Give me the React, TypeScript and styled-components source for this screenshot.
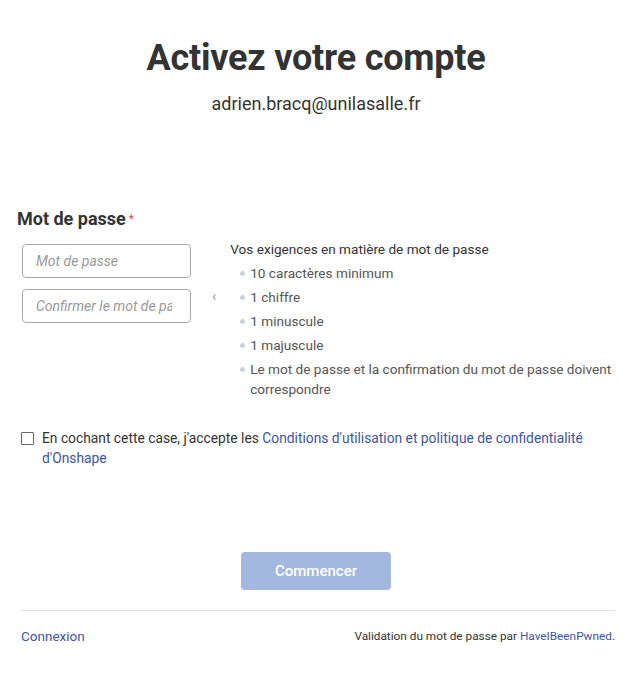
import React, { useState } from 'react'
import styled, { createGlobalStyle } from 'styled-components'

const GlobalStyle = createGlobalStyle`
  html, body {
    margin: 0;
    padding: 0;
    background: #fff;
    font-family: Roboto, "Liberation Sans", sans-serif;
    color: #333;
  }
  * { box-sizing: border-box; }
`

const requirements = [
  '10 caractères minimum',
  '1 chiffre',
  '1 minuscule',
  '1 majuscule',
  'Le mot de passe et la confirmation du mot de passe doivent correspondre',
]

export default function App() {
  const [accepted, setAccepted] = useState(false)

  return (
    <Page>
      <GlobalStyle />
      <Header>
        <Title>Activez votre compte</Title>
        <Email>adrien.bracq@unilasalle.fr</Email>
      </Header>

      <Section>
        <Label>
          Mot de passe<Required>*</Required>
        </Label>
        <PasswordRow>
          <Inputs>
            <Input type="password" placeholder="Mot de passe" />
            <Input type="password" placeholder="Confirmer le mot de passe" />
          </Inputs>
          <Caret>‹</Caret>
          <Requirements>
            <ReqTitle>Vos exigences en matière de mot de passe</ReqTitle>
            <ReqList>
              {requirements.map((r) => (
                <ReqItem key={r}>{r}</ReqItem>
              ))}
            </ReqList>
          </Requirements>
        </PasswordRow>
      </Section>

      <Terms>
        <Checkbox type="checkbox" checked={accepted} onChange={(e) => setAccepted(e.target.checked)} />
        <TermsText>
          En cochant cette case, j'accepte les{' '}
          <Link href="#">Conditions d'utilisation et politique de confidentialité d'Onshape</Link>
        </TermsText>
      </Terms>

      <Actions>
        <StartButton disabled={!accepted}>Commencer</StartButton>
      </Actions>

      <Footer>
        <Link href="#">Connexion</Link>
        <FooterNote>
          Validation du mot de passe par <Link href="#">HaveIBeenPwned</Link>.
        </FooterNote>
      </Footer>
    </Page>
  )
}

const Page = styled.div`
  width: 635px;
  padding: 0 20px 0 17px;
`

const Header = styled.div`
  display: flex;
  flex-direction: column;
  align-items: center;
  padding-top: 36px;
`

const Title = styled.h1`
  margin: 0;
  font-size: 36px;
  font-weight: 700;
  line-height: 44px;
  color: #333;
  letter-spacing: -0.2px;
`

const Email = styled.div`
  margin-top: 13px;
  font-size: 18px;
  line-height: 22px;
  color: #333;
`

const Section = styled.div`
  margin-top: 92px;
`

const Label = styled.div`
  font-size: 18px;
  font-weight: 700;
  line-height: 24px;
  color: #333;
`

const Required = styled.span`
  color: #d9534f;
  font-size: 12px;
  font-weight: 400;
  margin-left: 3px;
  vertical-align: top;
`

const PasswordRow = styled.div`
  display: flex;
  align-items: flex-start;
  margin-top: 8px;
  padding-left: 5px;
`

const Inputs = styled.div`
  display: flex;
  flex-direction: column;
  gap: 11px;
  margin-top: 5px;
`

const Input = styled.input`
  width: 169px;
  height: 34px;
  border: 1px solid #aaa;
  border-radius: 4px;
  padding: 0 18px 0 13px;
  font-family: inherit;
  font-size: 14px;
  color: #333;
  outline: none;
  &::placeholder {
    color: #999;
    font-style: italic;
  }
`

const Caret = styled.span`
  margin: 49px 14px 0 21px;
  color: #999;
  font-size: 14px;
  line-height: 16px;
`

const Requirements = styled.div`
  flex: 1;
  font-size: 13.6px;
  margin-right: -6px;
`

const ReqTitle = styled.div`
  line-height: 20px;
  color: #333;
`

const ReqList = styled.ul`
  margin: 0;
  padding: 0 0 0 10px;
  list-style: none;
`

const ReqItem = styled.li`
  position: relative;
  padding-left: 10px;
  margin-top: 4px;
  line-height: 20px;
  color: #555;
  &::before {
    content: '';
    position: absolute;
    left: 0;
    top: 8px;
    width: 5px;
    height: 5px;
    border-radius: 50%;
    background: #ccd3dc;
  }
`

const Terms = styled.label`
  display: flex;
  align-items: flex-start;
  margin-top: 29px;
  padding-left: 4px;
`

const Checkbox = styled.input`
  appearance: none;
  flex-shrink: 0;
  width: 13px;
  height: 13px;
  margin: 4px 8px 0 0;
  border: 1px solid #666;
  border-radius: 1px;
  background: #fff;
  &:checked {
    background: #3c64c8;
    border-color: #3c64c8;
  }
`

const TermsText = styled.span`
  font-size: 13.8px;
  line-height: 20px;
  color: #333;
`

const Link = styled.a`
  color: #3a55a8;
  text-decoration: none;
`

const Actions = styled.div`
  display: flex;
  justify-content: center;
  margin-top: 84px;
`

const StartButton = styled.button`
  width: 150px;
  height: 38px;
  border: none;
  border-radius: 4px;
  background: #a3b8df;
  color: #fff;
  font-family: inherit;
  font-size: 15px;
  font-weight: 500;
  cursor: pointer;
  &:not(:disabled) {
    background: #3c64c8;
  }
`

const Footer = styled.div`
  display: flex;
  justify-content: space-between;
  align-items: center;
  margin: 20px 0 0 4px;
  padding-top: 17px;
  border-top: 1px solid #e3e3e3;
  font-size: 13.5px;
`

const FooterNote = styled.span`
  font-size: 11.8px;
  color: #333;
`
